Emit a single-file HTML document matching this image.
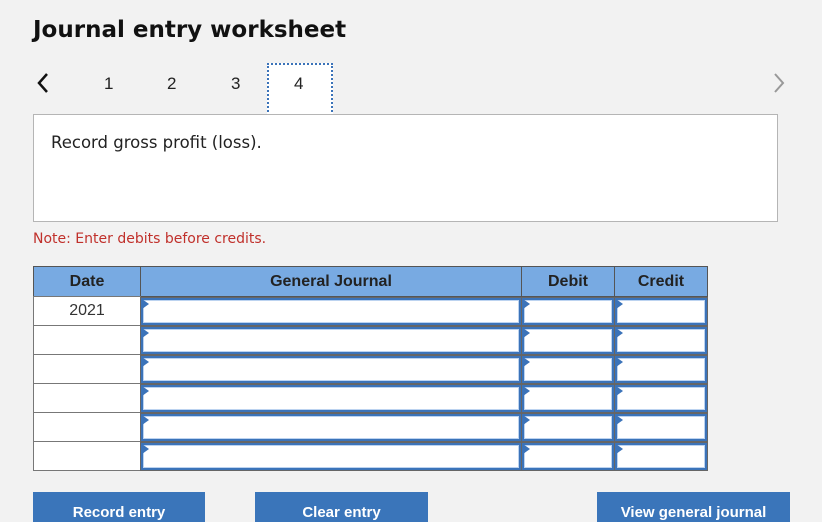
<!DOCTYPE html><html><head><style>
html,body{margin:0;width:822px;height:525px;overflow:hidden}
body{background:#f2f2f2;font-family:"Liberation Sans",Arial,sans-serif;position:relative}
.a{position:absolute}
h1{position:absolute;left:33px;top:17px;margin:0;font-size:23px;font-weight:bold;color:#111;font-family:"DejaVu Sans",sans-serif;letter-spacing:0}
.n{position:absolute;top:74px;font-size:17px;color:#222}
.hd{position:absolute;top:266px;height:31px;background:#78aae2;border:1px solid #555;box-sizing:border-box;font-weight:bold;font-size:16px;color:#222;text-align:center;line-height:29px}
.dc{position:absolute;left:33px;width:108px;height:30px;background:#fff;border:1px solid #777;box-sizing:border-box;text-align:center;font-size:16px;color:#333;line-height:27px}
.in{position:absolute;height:29px;background:#666;box-sizing:border-box;padding:1px 1px}
.in div{height:100%;box-sizing:border-box;border:2px solid #3b73b9;background:#fff;position:relative;box-shadow:inset 0 0 0 1px #bcd3f0}
.in div:before{content:"";position:absolute;left:-1px;top:-1px;border-left:7px solid #3b73b9;border-top:5px solid transparent;border-bottom:5px solid transparent;height:0}
.btn{position:absolute;top:492px;height:40px;background:#3a75ba;color:#fff;font-weight:bold;font-size:15px;text-align:center;line-height:42px;font-family:"Liberation Sans",Arial,sans-serif}
</style></head><body>
<h1>Journal entry worksheet</h1>
<svg class="a" style="left:36px;top:72px" width="14" height="22"><path d="M11 2 L3 11 L11 20" stroke="#111" stroke-width="2.5" fill="none"/></svg>
<svg class="a" style="left:772px;top:72px" width="14" height="22"><path d="M3 2 L11 11 L3 20" stroke="#999" stroke-width="2" fill="none"/></svg>
<div class="n" style="left:104px">1</div><div class="n" style="left:167px">2</div><div class="n" style="left:231px">3</div>
<div class="a" style="left:267px;top:63px;width:66px;height:53px;background:#fff;border:2px dotted #3b73b9;box-sizing:border-box"></div>
<div class="n" style="left:294px">4</div>
<div class="a" style="left:33px;top:114px;width:745px;height:108px;background:#fff;border:1px solid #b5b5b5;box-sizing:border-box"></div>
<div class="a" style="left:51px;top:133px;color:#222;font-family:'DejaVu Sans',sans-serif;font-size:16.5px">Record gross profit (loss).</div>
<div class="a" style="left:33px;top:231px;font-size:14px;color:#c0302b;font-family:'DejaVu Sans',sans-serif">Note: Enter debits before credits.</div>
<div class="hd" style="left:33px;width:108px">Date</div>
<div class="hd" style="left:140px;width:382px">General Journal</div>
<div class="hd" style="left:521px;width:94px">Debit</div>
<div class="hd" style="left:614px;width:94px">Credit</div>
<div class="dc" style="top:296px">2021</div>
<div class="dc" style="top:325px"></div><div class="dc" style="top:354px"></div><div class="dc" style="top:383px"></div><div class="dc" style="top:412px"></div><div class="dc" style="top:441px"></div>
<div id="rows"></div>
<script>
var t=[297,326,355,384,413,442],c=[[140,382],[521,94],[614,94]],h='';
t.forEach(function(y){c.forEach(function(x){h+='<div class="in" style="left:'+x[0]+'px;top:'+y+'px;width:'+x[1]+'px"><div></div></div>';});});
document.getElementById('rows').innerHTML=h;
</script>
<div class="btn" style="left:33px;width:172px">Record entry</div>
<div class="btn" style="left:255px;width:173px">Clear entry</div>
<div class="btn" style="left:597px;width:193px">View general journal</div>
<div class="a" style="left:0;top:522px;width:822px;height:20px;background:#fff;z-index:10"></div>
</body></html>
